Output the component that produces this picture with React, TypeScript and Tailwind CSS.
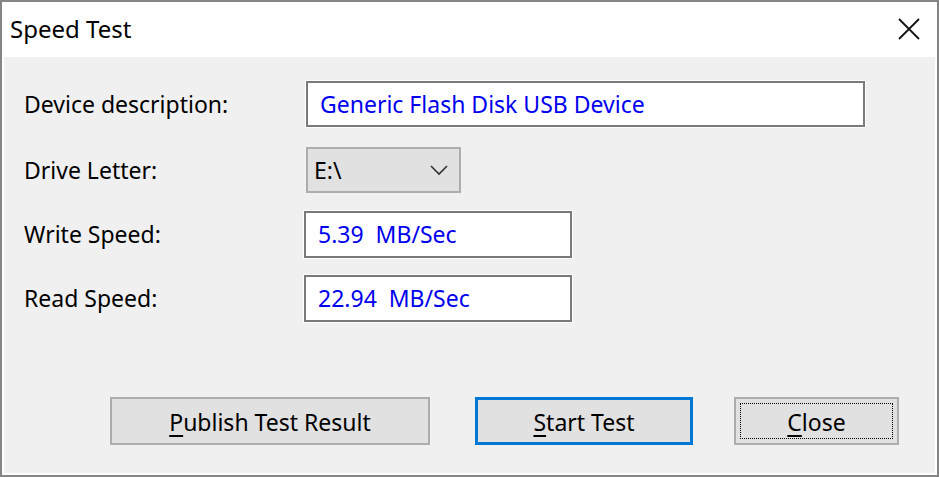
import React from 'react'

const FONT = { fontFamily: '"Noto Sans", "Open Sans", Arial, sans-serif' }

function Field({ value, width }: { value: string; width: string }): React.ReactElement {
  return (
    <div className={`${width} -ml-[2px] h-[47px] border-2 border-[#7a7a7a] bg-white flex items-center pl-[12px] text-[23px] text-[#0000ee] shadow-[0_0_0_1px_#ffffff] whitespace-pre`}>
      {value}
    </div>
  )
}

function Row({ label, children, className }: { label: string; children: React.ReactNode; className?: string }): React.ReactElement {
  return (
    <div className={`flex items-center ${className ?? ''}`}>
      <div className="w-[302px] pl-[20px] text-[23px] text-black">{label}</div>
      {children}
    </div>
  )
}

function Btn({ children, className, focus }: { children: React.ReactNode; className: string; focus?: boolean }): React.ReactElement {
  return (
    <div className={`relative h-[48px] bg-[#e1e1e1] flex items-center justify-center pt-[3px] text-[23px] text-black ${className}`}>
      {focus && <div className="absolute inset-[4px] border border-dotted border-black" />}
      {children}
    </div>
  )
}

export default function App(): React.ReactElement {
  return (
    <div className="w-[939px] h-[477px] border-2 border-[#858585] bg-white overflow-hidden" style={FONT}>
      <div className="h-full flex flex-col border-x-2 border-b-2 border-white">
        <div className="h-[55px] bg-white flex items-center justify-between pl-[6px] pr-[14px] pb-[2px]">
          <span className="text-[24px] text-black">Speed Test</span>
          <svg width="24" height="24" viewBox="0 0 24 24">
            <path d="M2 2 L22 22 M22 2 L2 22" stroke="#111" strokeWidth="1.8" fill="none" />
          </svg>
        </div>
        <div className="flex-1 bg-[#f0f0f0] flex flex-col pt-[24px]">
          <Row label="Device description:">
            <div className="w-[559px] h-[46px] border-2 border-[#7a7a7a] bg-white flex items-center pl-[12px] text-[23px] text-[#0000ee] shadow-[0_0_0_1px_#ffffff]">
              Generic Flash Disk USB Device
            </div>
          </Row>
          <Row label="Drive Letter:" className="mt-[20px]">
            <div className="w-[155px] h-[46px] border-2 border-[#adadad] bg-[#e1e1e1] flex items-center justify-between pl-[6px] pr-[10px] text-[23px] text-black">
              <span>E:\</span>
              <svg width="20" height="12" viewBox="0 0 20 12">
                <polyline points="2,2 10,10 18,2" stroke="#333" strokeWidth="1.6" fill="none" />
              </svg>
            </div>
          </Row>
          <Row label="Write Speed:" className="mt-[18px]">
            <Field value="5.39  MB/Sec" width="w-[268px]" />
          </Row>
          <Row label="Read Speed:" className="mt-[17px]">
            <Field value="22.94  MB/Sec" width="w-[268px]" />
          </Row>
          <div className="flex mt-[75px]">
            <Btn className="ml-[106px] w-[320px] border-2 border-[#adadad]">
              <span><span className="underline underline-offset-4">P</span>ublish Test Result</span>
            </Btn>
            <Btn className="ml-[45px] w-[218px] border-[3px] border-[#0078d7]">
              <span><span className="underline underline-offset-4">S</span>tart Test</span>
            </Btn>
            <Btn className="ml-[41px] w-[165px] border-2 border-[#adadad]" focus>
              <span className="relative"><span className="underline underline-offset-4">C</span>lose</span>
            </Btn>
          </div>
        </div>
      </div>
    </div>
  )
}
